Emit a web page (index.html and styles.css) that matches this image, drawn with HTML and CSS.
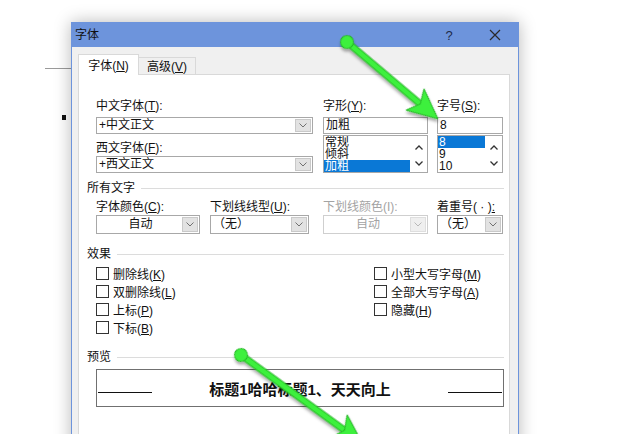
FILE: index.html
```html
<!DOCTYPE html>
<html lang="zh">
<head>
<meta charset="utf-8">
<link rel="stylesheet" href="styles.css">
</head>
<body>
<div class="doc">
  <div class="rule"></div>
  <div class="bullet"></div>
</div>

<div class="dialog">
  <div class="titlebar">
    <span class="title">字体</span>
    <span class="help">?</span>
    <span class="close"><svg width="12" height="12" viewBox="0 0 12 12"><path d="M1 1L11 11M11 1L1 11" stroke="#2a2a2a" stroke-width="1.2" fill="none"/></svg></span>
  </div>
  <div class="body">
    <div class="tabs">
      <div class="tab active">字体(<span class="mn">N</span>)</div>
      <div class="tab">高级(<span class="mn">V</span>)</div>
    </div>
    <div class="panel">
      <div class="top">
        <div class="col c1">
          <div class="lbl">中文字体(<span class="mn">T</span>):</div>
          <div class="combo w217"><span class="val">+中文正文</span><span class="btn"><svg width="8" height="5" viewBox="0 0 8 5"><path d="M0.5 0.5L4 4L7.5 0.5" stroke="#707070" fill="none"/></svg></span></div>
          <div class="lbl l2">西文字体(<span class="mn">F</span>):</div>
          <div class="combo w217 c2nd"><span class="val">+西文正文</span><span class="btn"><svg width="8" height="5" viewBox="0 0 8 5"><path d="M0.5 0.5L4 4L7.5 0.5" stroke="#707070" fill="none"/></svg></span></div>
        </div>
        <div class="col c2">
          <div class="lbl">字形(<span class="mn">Y</span>):</div>
          <div class="field w105">加粗</div>
          <div class="list w105">
            <div class="items"><div>常规</div><div>倾斜</div><div class="sel">加粗</div></div>
            <div class="sb">
              <svg width="8" height="5" viewBox="0 0 8 5"><path d="M0.5 4.5L4 1L7.5 4.5" stroke="#333" stroke-width="1.3" fill="none"/></svg>
              <svg width="8" height="5" viewBox="0 0 8 5"><path d="M0.5 0.5L4 4L7.5 0.5" stroke="#333" stroke-width="1.3" fill="none"/></svg>
            </div>
          </div>
        </div>
        <div class="col c3">
          <div class="lbl">字号(<span class="mn">S</span>):</div>
          <div class="field w66">8</div>
          <div class="list w66">
            <div class="items"><div class="sel">8</div><div>9</div><div>10</div></div>
            <div class="sb">
              <svg width="8" height="5" viewBox="0 0 8 5"><path d="M0.5 4.5L4 1L7.5 4.5" stroke="#333" stroke-width="1.3" fill="none"/></svg>
              <svg width="8" height="5" viewBox="0 0 8 5"><path d="M0.5 0.5L4 4L7.5 0.5" stroke="#333" stroke-width="1.3" fill="none"/></svg>
            </div>
          </div>
        </div>
      </div>

      <div class="group g1">所有文字</div>
      <div class="row4">
        <div class="cell k1">
          <div class="lbl">字体颜色(<span class="mn">C</span>):</div>
          <div class="combo tall w104"><span class="val center">自动</span><span class="btn"><svg width="8" height="5" viewBox="0 0 8 5"><path d="M0.5 0.5L4 4L7.5 0.5" stroke="#707070" fill="none"/></svg></span></div>
        </div>
        <div class="cell k2">
          <div class="lbl">下划线线型(<span class="mn">U</span>):</div>
          <div class="combo tall w99"><span class="val">（无）</span><span class="btn"><svg width="8" height="5" viewBox="0 0 8 5"><path d="M0.5 0.5L4 4L7.5 0.5" stroke="#707070" fill="none"/></svg></span></div>
        </div>
        <div class="cell k3">
          <div class="lbl dis">下划线颜色(I):</div>
          <div class="combo tall w105 disabled"><span class="val center">自动</span><span class="btn"><svg width="8" height="5" viewBox="0 0 8 5"><path d="M0.5 0.5L4 4L7.5 0.5" stroke="#b8b8b8" fill="none"/></svg></span></div>
        </div>
        <div class="cell k4">
          <div class="lbl clip">着重号(&nbsp;·&nbsp;)<span class="mn">:</span></div>
          <div class="combo tall w66"><span class="val">（无）</span><span class="btn"><svg width="8" height="5" viewBox="0 0 8 5"><path d="M0.5 0.5L4 4L7.5 0.5" stroke="#707070" fill="none"/></svg></span></div>
        </div>
      </div>

      <div class="group g2">效果</div>
      <div class="checks">
        <label class="check"><span class="box"></span><span>删除线(<span class="mn">K</span>)</span></label>
        <label class="check"><span class="box"></span><span>双删除线(<span class="mn">L</span>)</span></label>
        <label class="check"><span class="box"></span><span>上标(<span class="mn">P</span>)</span></label>
        <label class="check"><span class="box"></span><span>下标(<span class="mn">B</span>)</span></label>
        <label class="check"><span class="box"></span><span>小型大写字母(<span class="mn">M</span>)</span></label>
        <label class="check"><span class="box"></span><span>全部大写字母(<span class="mn">A</span>)</span></label>
        <label class="check"><span class="box"></span><span>隐藏(<span class="mn">H</span>)</span></label>
      </div>

      <div class="group g3">预览</div>
      <div class="preview">
        <span class="pline"></span>
        <span class="ptext">标题1哈哈标题1、天天向上</span>
        <span class="pline"></span>
      </div>
    </div>
  </div>
</div>

<svg class="arrows" width="633" height="434" viewBox="0 0 633 434">
  <defs>
    <filter id="sh" x="-20%" y="-20%" width="140%" height="140%">
      <feDropShadow dx="2" dy="2" stdDeviation="1.5" flood-color="#000" flood-opacity="0.35"/>
    </filter>
  </defs>
  <g filter="url(#sh)" transform="translate(347,42) rotate(40.2)">
    <rect x="0" y="-3" width="98" height="6" fill="#3cf03c" stroke="#22b422" stroke-width="1"/>
    <polygon points="119,0 89,-14 96,0 89,14" fill="#3cf03c" stroke="#22b422" stroke-width="1"/>
    <circle cx="0" cy="0" r="6.5" fill="#3cf03c" stroke="#22b422" stroke-width="1"/>
  </g>
  <g filter="url(#sh)" transform="translate(241,355) rotate(36)">
    <rect x="0" y="-3" width="128" height="6" fill="#3cf03c" stroke="#22b422" stroke-width="1"/>
    <polygon points="150,0 121,-14 128,0 121,14" fill="#3cf03c" stroke="#22b422" stroke-width="1"/>
    <circle cx="0" cy="0" r="6.5" fill="#3cf03c" stroke="#22b422" stroke-width="1"/>
  </g>
</svg>
</body>
</html>
```

FILE: styles.css
```css
* { box-sizing: border-box; }

body {
  margin: 0;
  width: 633px;
  height: 434px;
  overflow: hidden;
  position: relative;
  background: #fff;
  font-family: "Liberation Sans", "Noto Sans CJK SC", sans-serif;
  font-size: 12px;
  color: #111;
}

.mn { text-decoration: underline; }

.doc { padding-top: 68px; }
.rule { margin-left: 45px; width: 26px; height: 1px; background: #9a9a9a; }
.bullet { margin: 46px 0 0 62px; width: 4px; height: 5px; background: #111; }

.dialog {
  position: absolute;
  left: 71px;
  top: 22px;
  width: 448px;
  height: 440px;
  border: 1px solid #6d94dc;
  background: #f0f0f0;
  box-shadow: 0 0 16px rgba(0, 0, 0, 0.28);
}

.titlebar {
  height: 24px;
  background: #6d94dc;
  display: flex;
  align-items: center;
}
.title { flex: 1; padding-left: 3px; line-height: 24px; color: #111; }
.help { width: 20px; text-align: center; font-size: 13px; color: #1d2a48; margin-right: 13px; }
.close { width: 46px; display: flex; justify-content: center; align-items: center; }

.body { padding: 7px 8px 0 6px; }

.tabs { display: flex; align-items: flex-end; height: 20px; }
.tab {
  width: 57px;
  height: 17px;
  border: 1px solid #d9d9d9;
  border-bottom: none;
  border-left: none;
  text-align: center;
  line-height: 18px;
  background: #f0f0f0;
}
.tab.active {
  width: 61px;
  height: 21px;
  margin-bottom: -1px;
  border-left: 1px solid #d9d9d9;
  background: #fff;
  line-height: 22px;
  position: relative;
  z-index: 1;
}

.panel {
  background: #fff;
  border: 1px solid #d9d9d9;
  height: 380px;
  padding-left: 8px;
}

.top { display: flex; margin: 24px 0 0 9px; }
.col { display: flex; flex-direction: column; }
.c1 { width: 227px; }
.c2 { width: 114px; }
.c3 { width: 66px; }

.lbl { height: 14px; line-height: 14px; white-space: nowrap; }
.l2 { margin-top: 7px; }
.lbl.dis { color: #a3a3a3; }
.lbl.clip { overflow: hidden; width: 66px; }

.combo {
  height: 17px;
  margin-top: 4px;
  border: 1px solid #a8a8a8;
  background: #fff;
  display: flex;
}
.combo.c2nd { margin-top: 1px; }
.combo.tall { height: 19px; margin-top: 1px; }
.val { flex: 1; padding-left: 2px; line-height: 15px; white-space: nowrap; overflow: hidden; }
.tall .val { line-height: 17px; }
.val.center { text-align: center; }
.btn {
  width: 16px;
  margin: 1px 1px 1px 0;
  background: #e2e2e2;
  border: 1px solid #c9c9c9;
  display: flex;
  align-items: center;
  justify-content: center;
}
.disabled { border-color: #cfcfcf; color: #a3a3a3; }
.disabled .btn { background: #efefef; border-color: #dedede; }

.w217 { width: 217px; }
.w105 { width: 105px; }
.w104 { width: 104px; }
.w99 { width: 99px; }
.w66 { width: 66px; }

.field {
  height: 17px;
  margin-top: 4px;
  border: 1px solid #a8a8a8;
  padding-left: 2px;
  line-height: 15px;
}
.list {
  height: 38px;
  margin-top: 1px;
  border: 1px solid #a8a8a8;
  display: flex;
  overflow: hidden;
}
.items { flex: 1; line-height: 12px; }
.items div { padding-left: 1px; height: 12px; }
.items .sel { background: #0a78d6; color: #fff; }
.sb {
  width: 17px;
  display: flex;
  flex-direction: column;
  justify-content: space-between;
  align-items: center;
  padding: 9px 0 6px;
}

.group {
  display: flex;
  align-items: center;
  gap: 6px;
  width: 417px;
  height: 14px;
  line-height: 14px;
  white-space: nowrap;
}
.group::after { content: ""; flex: 1; height: 1px; background: #dcdcdc; }
.g1 { margin-top: 8px; }
.g2 { margin-top: 13px; }
.g3 { margin-top: 14px; }

.row4 { display: flex; margin: 5px 0 0 9px; }
.cell { display: flex; flex-direction: column; }
.k1 { width: 114px; }
.k2 { width: 113px; }
.k3 { width: 114px; }
.k4 { width: 66px; }

.checks {
  display: grid;
  grid-template-columns: 278px auto;
  grid-template-rows: repeat(4, 18px);
  grid-auto-flow: column;
  margin: 3px 0 0 9px;
}
.check { display: flex; align-items: center; gap: 4px; white-space: nowrap; }
.box { width: 13px; height: 13px; border: 1px solid #333; background: #fff; }

.preview {
  margin: 5px 0 0 9px;
  width: 408px;
  height: 38px;
  border: 1px solid #707070;
  display: flex;
  align-items: center;
  padding: 0 1px;
}
.pline { width: 54px; height: 1px; background: #111; margin-top: 9px; }
.ptext { flex: 1; text-align: center; font-weight: bold; font-size: 15px; color: #111; }

.arrows { position: absolute; left: 0; top: 0; pointer-events: none; }
```
